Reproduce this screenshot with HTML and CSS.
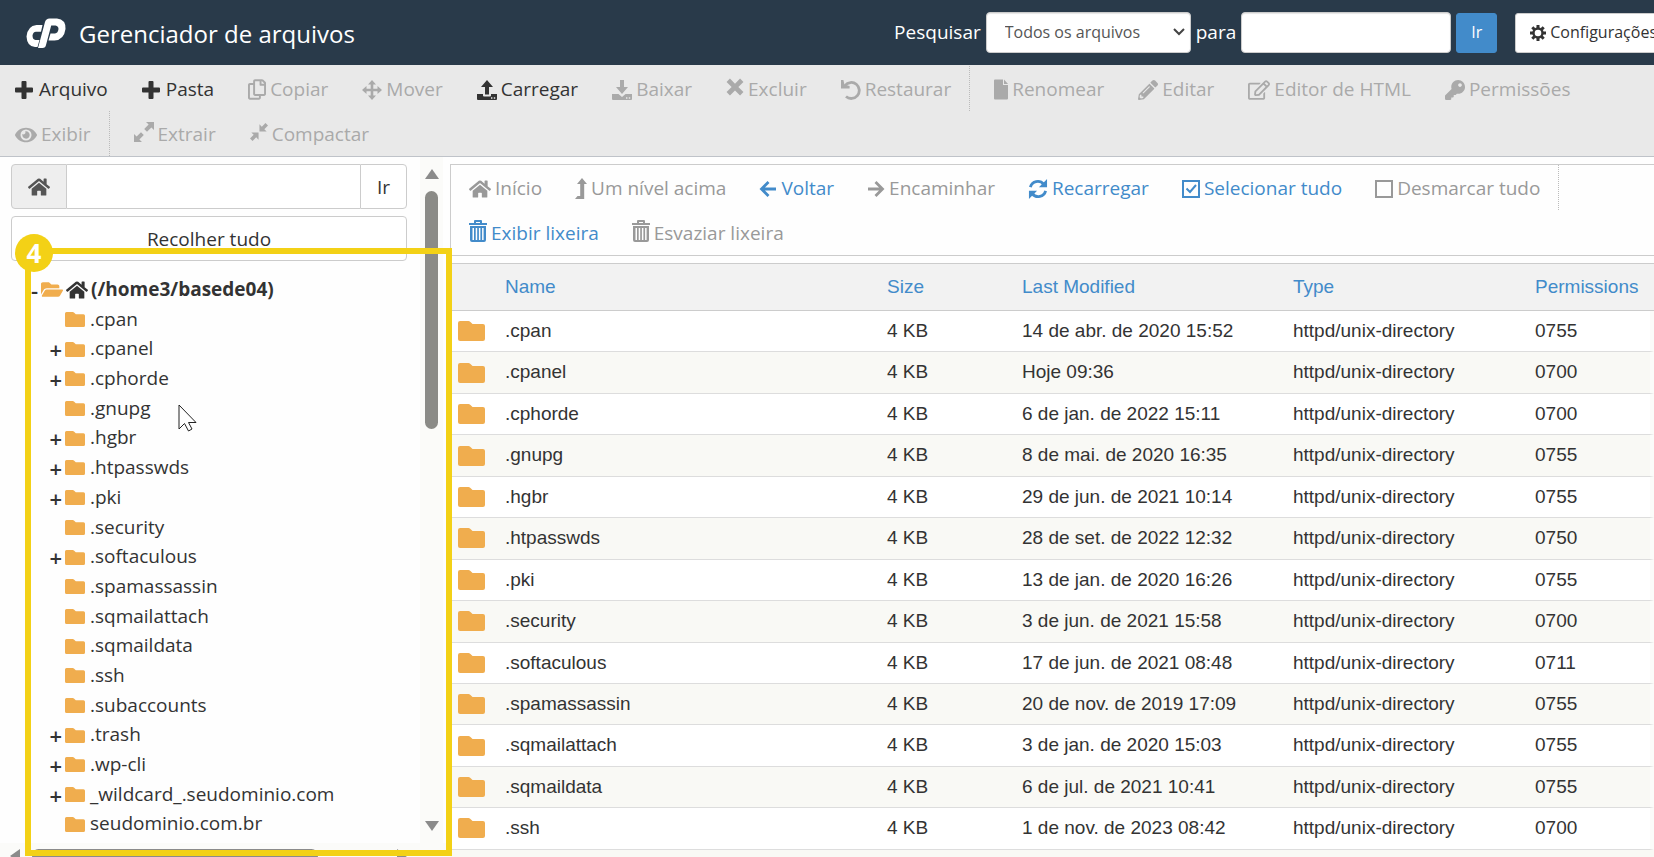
FILE: index.html
```html
<!DOCTYPE html>
<html lang="pt-BR">
<head>
<meta charset="utf-8">
<meta name="viewport" content="width=device-width, initial-scale=1">
<title>Gerenciador de arquivos</title>
<link rel="stylesheet" href="styles.css">
</head>
<body>
<svg class="sprite" aria-hidden="true">
  <symbol id="plus" viewBox="0 0 18 18"><path d="M6.500 1q0-1 1-1h3q1 0 1 1v5.500h5.500q1 0 1 1v3q0 1-1 1h-5.500v5.500q0 1-1 1h-3q-1 0-1-1v-5.500H1q-1 0-1-1v-3q0-1 1-1h5.500z"/></symbol>
  <symbol id="copy" viewBox="0 0 448 512"><path d="M433.941 65.941l-51.882-51.882A48 48 0 0 0 348.118 0H176c-26.510 0-48 21.490-48 48v48H48c-26.510 0-48 21.490-48 48v320c0 26.510 21.490 48 48 48h224c26.510 0 48-21.490 48-48v-48h80c26.510 0 48-21.490 48-48V99.882a48 48 0 0 0-14.059-33.941zM266 464H54a6 6 0 0 1-6-6V150a6 6 0 0 1 6-6h74v224c0 26.510 21.490 48 48 48h96v42a6 6 0 0 1-6 6zm128-96H182a6 6 0 0 1-6-6V54a6 6 0 0 1 6-6h106v88c0 13.255 10.745 24 24 24h88v202a6 6 0 0 1-6 6zm6-256h-64V48h9.632c1.591 0 3.117.632 4.243 1.757l48.368 48.368a6 6 0 0 1 1.757 4.243V112z"/></symbol>
  <symbol id="move" viewBox="0 0 20 20"><path d="M10 0l4 4.500h-2.700v4.200h4.200V6L20 10l-4.500 4v-2.700h-4.200v4.200H14L10 20l-4-4.500h2.700v-4.200H4.500V14L0 10l4.500-4v2.700h4.200V4.500H6z"/></symbol>
  <symbol id="upload" viewBox="0 0 20 20"><path d="M10 0l6 7h-4v7.500H8V7H4zM0 14h6v1.500q0 1 1 1h6q1 0 1-1V14h6v5q0 1-1 1H1q-1 0-1-1zM14 17.300v1.400h1.400v-1.400zM16.800 17.300v1.400h1.400v-1.400z" fill-rule="evenodd"/></symbol>
  <symbol id="download" viewBox="0 0 20 20"><path d="M8 0h4v7h4l-6 7-6-7h4zM0 14h6.500l3.500 3 3.500-3H20v5q0 1-1 1H1q-1 0-1-1zM14 17.300v1.400h1.400v-1.400zM16.800 17.300v1.400h1.400v-1.400z" fill-rule="evenodd"/></symbol>
  <symbol id="cross" viewBox="0 0 16 16"><path d="M3.500.500L8 5l4.500-4.500L15.500 3.500 11 8l4.500 4.500-3 3L8 11l-4.500 4.500-3-3L5 8 .500 3.500z"/></symbol>
  <symbol id="undo" viewBox="0 0 20 20"><path d="M4 5.500A8 8 0 1 1 5 16.500" fill="none" stroke="currentColor" stroke-width="2.800"/><path d="M0 0h2.400l1 4.600L8.600 6v2.600H0z"/></symbol>
  <symbol id="file" viewBox="0 0 14 20"><path d="M1 0h8v5.500h5V19q0 1-1 1H1q-1 0-1-1V1q0-1 1-1zM10 0l4 4.500h-4z"/></symbol>
  <symbol id="pencil" viewBox="0 0 512 512"><path d="M497.900 142.100l-46.100 46.100c-4.700 4.700-12.300 4.700-17 0l-111-111c-4.700-4.700-4.700-12.300 0-17l46.100-46.100c18.700-18.700 49.100-18.700 67.900 0l60.100 60.100c18.800 18.700 18.800 49.100 0 67.900zM284.200 99.800L21.600 362.400.400 483.900c-2.900 16.400 11.400 30.600 27.800 27.800l121.500-21.300 262.600-262.600c4.700-4.700 4.700-12.300 0-17l-111-111c-4.800-4.700-12.400-4.700-17.100 0zM124.100 339.900c-5.500-5.500-5.500-14.300 0-19.800l154-154c5.500-5.500 14.300-5.500 19.800 0s5.500 14.300 0 19.800l-154 154c-5.500 5.500-14.300 5.500-19.800 0zM88 424h48v36.300l-64.500 11.300-31.100-31.100L51.700 376H88v48z"/></symbol>
  <symbol id="edit" viewBox="0 0 576 512"><path d="M402.300 344.900l32-32c5-5 13.700-1.500 13.700 5.700V464c0 26.500-21.500 48-48 48H48c-26.500 0-48-21.500-48-48V112c0-26.500 21.500-48 48-48h273.500c7.100 0 10.700 8.600 5.700 13.700l-32 32c-1.500 1.500-3.500 2.300-5.700 2.300H48v352h352V350.500c0-2.100.800-4.100 2.300-5.600zm156.600-201.800L296.300 405.700l-90.400 10c-26.200 2.900-48.500-19.200-45.600-45.600l10-90.400L432.900 17.100c22.900-22.900 59.900-22.900 82.700 0l43.200 43.200c22.900 22.900 22.900 60 .100 82.800zM460.100 174L402 115.900 216.200 301.800l-7.300 65.300 65.300-7.300L460.100 174zm64.800-79.700l-43.200-43.200c-4.100-4.100-10.800-4.100-14.800 0L436 82l58.100 58.100 30.900-30.900c4-4.200 4-10.800-.100-14.900z"/></symbol>
  <symbol id="key" viewBox="0 0 512 512"><path d="M512 176C512 273.200 433.200 352 336 352c-11.200 0-22.200-1-32.800-3l-24 27A24 24 0 0 1 261.200 384H224v40c0 13.300-10.700 24-24 24h-40v40c0 13.300-10.700 24-24 24H24c-13.300 0-24-10.700-24-24v-78c0-6.400 2.500-12.500 7-17l161.800-161.800C163.100 213.800 160 195.300 160 176 160 78.800 238.800 0 336 0 433.500 0 512 78.500 512 176zM336 128c0 26.500 21.500 48 48 48s48-21.500 48-48-21.500-48-48-48-48 21.500-48 48z"/></symbol>
  <symbol id="eye" viewBox="0 0 576 512"><path d="M572.520 241.400C518.290 135.590 410.930 64 288 64S57.680 135.640 3.480 241.410a32.350 32.350 0 0 0 0 29.190C57.710 376.410 165.070 448 288 448s230.320-71.640 284.520-177.410a32.350 32.350 0 0 0 0-29.190zM288 400a144 144 0 1 1 144-144 143.930 143.930 0 0 1-144 144zm0-240a95.310 95.310 0 0 0-25.310 3.790 47.850 47.850 0 0 1-66.900 66.900A95.780 95.780 0 1 0 288 160z"/></symbol>
  <symbol id="expand" viewBox="0 0 20 20"><path d="M12 0h8v8l-2.600-2.600-4.400 4.400L10.200 7l4.400-4.400zM8 20H0v-8l2.600 2.600 4.400-4.400L9.800 13l-4.400 4.400z"/></symbol>
  <symbol id="compress" viewBox="0 0 20 20"><path d="M10.500 1.500l2.600 2.600L17.200 0 20 2.800l-4.100 4.100 2.600 2.600h-8zM9.500 18.500l-2.600-2.600L2.800 20 0 17.200l4.100-4.100-2.600-2.600h8z"/></symbol>
  <symbol id="home" viewBox="0 0 576 512"><path d="M280.370 148.260L96 300.110V464a16 16 0 0 0 16 16l112.060-.290a16 16 0 0 0 15.920-16V368a16 16 0 0 1 16-16h64a16 16 0 0 1 16 16v95.640a16 16 0 0 0 16 16.050L464 480a16 16 0 0 0 16-16V300L295.670 148.260a12.190 12.190 0 0 0-15.300 0zM571.600 251.470L488 182.560V44.050a12 12 0 0 0-12-12h-56a12 12 0 0 0-12 12v72.610L318.470 43a48 48 0 0 0-61 0L4.340 251.470a12 12 0 0 0-1.600 16.900l25.500 31A12 12 0 0 0 45.150 301l235.220-193.740a12.190 12.190 0 0 1 15.300 0L530.900 301a12 12 0 0 0 16.900-1.600l25.500-31a12 12 0 0 0-1.700-16.930z"/></symbol>
  <symbol id="level-up" viewBox="0 0 12 21"><path d="M7 0l5 6H9.200v15H0l2.500-3H5.200V6H2z"/></symbol>
  <symbol id="arrow-left" viewBox="0 0 18 18"><path d="M17 9H2.500M9.500 2l-7 7 7 7" fill="none" stroke="currentColor" stroke-width="2.800"/></symbol>
  <symbol id="arrow-right" viewBox="0 0 18 18"><path d="M1 9h14.500M8.500 2l7 7-7 7" fill="none" stroke="currentColor" stroke-width="2.800"/></symbol>
  <symbol id="sync" viewBox="0 0 20 21"><path d="M2 8.500A8 8 0 0 1 16 5.500M18 12.500A8 8 0 0 1 4 15.500" fill="none" stroke="currentColor" stroke-width="3"/><path d="M19.500 0v8.600H11l3-3 3-3zM.500 21v-8.600H9l-3 3-3 3z"/></symbol>
  <symbol id="checked" viewBox="0 0 18 18"><path d="M1 1h16v16H1zM4.500 8.500L8 12l6-7" fill="none" stroke="currentColor" stroke-width="2"/></symbol>
  <symbol id="unchecked" viewBox="0 0 18 18"><path d="M1 1h16v16H1z" fill="none" stroke="currentColor" stroke-width="2"/></symbol>
  <symbol id="trash" viewBox="0 0 18 22"><path d="M0 3h5V1q0-1 1-1h6q1 0 1 1v2h5v2H0zM7 2v1h4V2zM1 6h16v14q0 2-2 2H3q-2 0-2-2zM3.500 8v12H5V8zM6.700 8v12h1.500V8zM9.900 8v12h1.500V8zM13.100 8v12h1.500V8z" fill-rule="evenodd"/></symbol>
  <symbol id="gear" viewBox="0 0 16 16"><g stroke="currentColor" stroke-width="3"><path d="M8 0v3M8 13v3M0 8h3M13 8h3M2.300 2.300l2.200 2.200M11.500 11.500l2.200 2.200M13.700 2.300l-2.200 2.200M4.500 11.500l-2.200 2.200"/></g><circle cx="8" cy="8" r="4.500" fill="none" stroke="currentColor" stroke-width="2.400"/></symbol>
  <symbol id="folder" viewBox="0 0 26 20" preserveAspectRatio="none"><path d="M2 0h8q1 0 2 1l2 2h10q2 0 2 2v13q0 2-2 2H2q-2 0-2-2V2q0-2 2-2z"/></symbol>
  <symbol id="folder-open" viewBox="0 0 576 384"><path d="M572.700 228L500 352A64 64 0 0 1 445 384H45c-18.500 0-30-20-20.700-36L96.700 224A64 64 0 0 1 152 192h400c18.500 0 30 20 20.700 36zM152 160h328v-48c0-26.500-21.500-48-48-48H272L208 0H48C21.500 0 0 21.500 0 48v278L69 208C86 178 118 160 152 160z"/></symbol>
  <symbol id="logo" viewBox="0 0 40 30"><path d="M17 7h-6Q2 8 1 18.500 1.500 28.500 9.500 29H12l2-7H10q-3-.500-3-4.500 .500-3.500 3.500-3.800h5z"/><path d="M12.500 30L19.500 4Q20.500.500 24 .500h7.500Q40.500 1.500 40 11 38.500 22 29 22.500h-6l2-7h4.500q3-.500 3.500-4.500 0-3-3-3.500h-4.300L20.500 27q-.500 3-3.500 3z"/></symbol>
</svg>

<header class="header">
  <svg class="logo"><use href="#logo"/></svg>
  <h1 class="title">Gerenciador de arquivos</h1>
  <form class="search">
    <label for="scope">Pesquisar</label>
    <span class="select-box">
      <select id="scope" class="field select"><option>Todos os arquivos</option></select>
      <svg class="chevron" viewBox="0 0 12 8"><path d="M1 1l5 5 5-5" fill="none" stroke="currentColor" stroke-width="2"/></svg>
    </span>
    <label for="query">para</label>
    <input id="query" class="field query" type="text">
    <button class="go" type="button">Ir</button>
    <button class="settings" type="button"><svg class="gear"><use href="#gear"/></svg>Configurações</button>
  </form>
</header>

<nav class="toolbar actions">
  <button class="action on"><svg class="i18 wide"><use href="#plus"/></svg>Arquivo</button>
  <button class="action on"><svg class="i18 wide"><use href="#plus"/></svg>Pasta</button>
  <button class="action"><svg class="i18 tall"><use href="#copy"/></svg>Copiar</button>
  <button class="action"><svg class="i20"><use href="#move"/></svg>Mover</button>
  <button class="action on"><svg class="i20"><use href="#upload"/></svg>Carregar</button>
  <button class="action"><svg class="i20"><use href="#download"/></svg>Baixar</button>
  <button class="action"><svg class="i18 raised"><use href="#cross"/></svg>Excluir</button>
  <button class="action last"><svg class="i20"><use href="#undo"/></svg>Restaurar</button>
  <button class="action"><svg class="i14 tall"><use href="#file"/></svg>Renomear</button>
  <button class="action"><svg class="i20"><use href="#pencil"/></svg>Editar</button>
  <button class="action"><svg class="i22"><use href="#edit"/></svg>Editor de HTML</button>
  <button class="action"><svg class="i20"><use href="#key"/></svg>Permissões</button>
  <button class="action last"><svg class="i22"><use href="#eye"/></svg>Exibir</button>
  <button class="action"><svg class="i20 raised"><use href="#expand"/></svg>Extrair</button>
  <button class="action"><svg class="i18 raised"><use href="#compress"/></svg>Compactar</button>
</nav>

<main class="main">
  <aside class="sidebar">
    <div class="side-view">
      <div class="side-content">
        <form class="path">
          <button class="path-home" type="button" aria-label="Início"><svg class="i22"><use href="#home"/></svg></button>
          <input class="path-input" type="text" aria-label="Caminho">
          <button class="path-go" type="button">Ir</button>
        </form>
        <button class="collapse" type="button">Recolher tudo</button>
        <ul class="tree">
          <li class="root"><span class="sign">-</span><svg class="open"><use href="#folder-open"/></svg><svg class="i22"><use href="#home"/></svg><b>(/home3/basede04)</b></li>
          <li><span class="sign"></span><svg class="dir"><use href="#folder"/></svg>.cpan</li>
          <li><span class="sign">+</span><svg class="dir"><use href="#folder"/></svg>.cpanel</li>
          <li><span class="sign">+</span><svg class="dir"><use href="#folder"/></svg>.cphorde</li>
          <li><span class="sign"></span><svg class="dir"><use href="#folder"/></svg>.gnupg</li>
          <li><span class="sign">+</span><svg class="dir"><use href="#folder"/></svg>.hgbr</li>
          <li><span class="sign">+</span><svg class="dir"><use href="#folder"/></svg>.htpasswds</li>
          <li><span class="sign">+</span><svg class="dir"><use href="#folder"/></svg>.pki</li>
          <li><span class="sign"></span><svg class="dir"><use href="#folder"/></svg>.security</li>
          <li><span class="sign">+</span><svg class="dir"><use href="#folder"/></svg>.softaculous</li>
          <li><span class="sign"></span><svg class="dir"><use href="#folder"/></svg>.spamassassin</li>
          <li><span class="sign"></span><svg class="dir"><use href="#folder"/></svg>.sqmailattach</li>
          <li><span class="sign"></span><svg class="dir"><use href="#folder"/></svg>.sqmaildata</li>
          <li><span class="sign"></span><svg class="dir"><use href="#folder"/></svg>.ssh</li>
          <li><span class="sign"></span><svg class="dir"><use href="#folder"/></svg>.subaccounts</li>
          <li><span class="sign">+</span><svg class="dir"><use href="#folder"/></svg>.trash</li>
          <li><span class="sign">+</span><svg class="dir"><use href="#folder"/></svg>.wp-cli</li>
          <li><span class="sign">+</span><svg class="dir"><use href="#folder"/></svg>_wildcard_.seudominio.com</li>
          <li><span class="sign"></span><svg class="dir"><use href="#folder"/></svg>seudominio.com.br</li>
        </ul>
      </div>
      <div class="scroll-y"><i class="arrow up"></i><i class="thumb-y"></i><i class="arrow down"></i></div>
    </div>
    <div class="scroll-x"><i class="arrow left"></i><i class="thumb-x"></i><i class="arrow right"></i></div>
    <div class="highlight"><span class="badge">4</span></div>
    <svg class="cursor" viewBox="0 0 19 28"><path d="M1 1v24l5.500-5.500 4 7.500 3.500-2-3.500-6.500H18z" fill="#fff" stroke="#222"/></svg>
  </aside>

  <section class="files">
    <nav class="browse actions">
      <button class="action"><svg class="i22"><use href="#home"/></svg>Início</button>
      <button class="action"><svg class="i12 tall"><use href="#level-up"/></svg>Um nível acima</button>
      <button class="action on"><svg class="i18"><use href="#arrow-left"/></svg>Voltar</button>
      <button class="action"><svg class="i18"><use href="#arrow-right"/></svg>Encaminhar</button>
      <button class="action on"><svg class="i20"><use href="#sync"/></svg>Recarregar</button>
      <button class="action on"><svg class="i18"><use href="#checked"/></svg>Selecionar tudo</button>
      <button class="action last"><svg class="i18"><use href="#unchecked"/></svg>Desmarcar tudo</button>
      <button class="action on"><svg class="i18 bin"><use href="#trash"/></svg>Exibir lixeira</button>
      <button class="action"><svg class="i18 bin"><use href="#trash"/></svg>Esvaziar lixeira</button>
    </nav>
    <div class="listing">
      <table class="table">
        <colgroup><col class="c-icon"><col><col class="c-size"><col class="c-date"><col class="c-type"><col class="c-perm"></colgroup>
        <thead><tr><th></th><th><a href="#name">Name</a></th><th><a href="#size">Size</a></th><th><a href="#modified">Last Modified</a></th><th><a href="#type">Type</a></th><th><a href="#permissions">Permissions</a></th></tr></thead>
        <tbody>
          <tr><td><svg class="big"><use href="#folder"/></svg></td><td>.cpan</td><td>4 KB</td><td>14 de abr. de 2020 15:52</td><td>httpd/unix-directory</td><td>0755</td></tr>
          <tr><td><svg class="big"><use href="#folder"/></svg></td><td>.cpanel</td><td>4 KB</td><td>Hoje 09:36</td><td>httpd/unix-directory</td><td>0700</td></tr>
          <tr><td><svg class="big"><use href="#folder"/></svg></td><td>.cphorde</td><td>4 KB</td><td>6 de jan. de 2022 15:11</td><td>httpd/unix-directory</td><td>0700</td></tr>
          <tr><td><svg class="big"><use href="#folder"/></svg></td><td>.gnupg</td><td>4 KB</td><td>8 de mai. de 2020 16:35</td><td>httpd/unix-directory</td><td>0755</td></tr>
          <tr><td><svg class="big"><use href="#folder"/></svg></td><td>.hgbr</td><td>4 KB</td><td>29 de jun. de 2021 10:14</td><td>httpd/unix-directory</td><td>0755</td></tr>
          <tr><td><svg class="big"><use href="#folder"/></svg></td><td>.htpasswds</td><td>4 KB</td><td>28 de set. de 2022 12:32</td><td>httpd/unix-directory</td><td>0750</td></tr>
          <tr><td><svg class="big"><use href="#folder"/></svg></td><td>.pki</td><td>4 KB</td><td>13 de jan. de 2020 16:26</td><td>httpd/unix-directory</td><td>0755</td></tr>
          <tr><td><svg class="big"><use href="#folder"/></svg></td><td>.security</td><td>4 KB</td><td>3 de jun. de 2021 15:58</td><td>httpd/unix-directory</td><td>0700</td></tr>
          <tr><td><svg class="big"><use href="#folder"/></svg></td><td>.softaculous</td><td>4 KB</td><td>17 de jun. de 2021 08:48</td><td>httpd/unix-directory</td><td>0711</td></tr>
          <tr><td><svg class="big"><use href="#folder"/></svg></td><td>.spamassassin</td><td>4 KB</td><td>20 de nov. de 2019 17:09</td><td>httpd/unix-directory</td><td>0755</td></tr>
          <tr><td><svg class="big"><use href="#folder"/></svg></td><td>.sqmailattach</td><td>4 KB</td><td>3 de jan. de 2020 15:03</td><td>httpd/unix-directory</td><td>0755</td></tr>
          <tr><td><svg class="big"><use href="#folder"/></svg></td><td>.sqmaildata</td><td>4 KB</td><td>6 de jul. de 2021 10:41</td><td>httpd/unix-directory</td><td>0755</td></tr>
          <tr><td><svg class="big"><use href="#folder"/></svg></td><td>.ssh</td><td>4 KB</td><td>1 de nov. de 2023 08:42</td><td>httpd/unix-directory</td><td>0700</td></tr>
        </tbody>
      </table>
    </div>
  </section>
</main>
</body>
</html>
```

FILE: styles.css
```css
* { box-sizing: border-box; }

body {
  margin: 0;
  height: 100vh;
  display: flex;
  flex-direction: column;
  overflow: hidden;
  background: #fefefe;
  color: #333;
  font: 19px/27px "Open Sans", "Noto Sans", sans-serif;
}

button, input, select { font: inherit; color: inherit; margin: 0; }
button { cursor: pointer; }
svg { fill: currentColor; flex: none; overflow: visible; }
.sprite { position: absolute; width: 0; height: 0; }

/* Header */
.header {
  flex: none;
  display: flex;
  align-items: center;
  height: 65px;
  padding-left: 25px;
  background: #293a4a;
  color: #fff;
}
.logo { width: 41px; height: 30px; margin-right: 13px; }
.title { margin: 0; flex: 1; font-size: 24px; font-weight: 400; line-height: 32px; padding-top: 2px; white-space: nowrap; }
.search { flex: none; display: flex; align-items: center; gap: 5px; margin-right: -18px; }
.field { height: 41px; border: 1px solid #ccc; border-radius: 4px; background: #fff; color: #555; box-shadow: inset 0 1px 1px rgba(0, 0, 0, .1); }
.select-box { position: relative; display: flex; }
.select { width: 205px; padding: 0 18px; appearance: none; font-size: 16px; }
.chevron { position: absolute; right: 6px; top: 16px; width: 12px; height: 8px; color: #444; pointer-events: none; }
.query { width: 210px; }
.go { width: 41px; height: 40px; border: 1px solid #428bca; border-radius: 3px; background: #428bca; color: #fff; font-size: 16px; padding: 0; }
.settings { display: flex; align-items: center; gap: 4px; height: 40px; margin-left: 13px; padding: 0 14px; border: 1px solid #ccc; border-radius: 3px; background: #fff; color: #333; font-size: 16px; }
.gear { width: 16px; height: 16px; }

/* Action bars */
.actions { flex: none; display: flex; flex-wrap: wrap; }
.action {
  display: flex;
  align-items: center;
  gap: 4px;
  height: 45px;
  padding: 2px 18px 0 15px;
  border: 0;
  background: none;
  white-space: nowrap;
}
.action.last { border-right: 1px dotted #bbb; margin-right: 8px; }
.toolbar { column-gap: 1px; padding-top: 1px; background: #e9e9e9; border-bottom: 1px solid #bfc3c9; }
.toolbar .action { color: #aaa; }
.toolbar .on { color: #333; }
.browse { padding-left: 3px; border: 1px solid #ccc; border-right: 0; }
.browse .action { color: #999; }
.browse .on { color: #428bca; }

.i12 { width: 12px; height: 18px; }
.i14 { width: 14px; height: 18px; }
.i18 { width: 18px; height: 18px; }
.i20 { width: 20px; height: 20px; }
.i22 { width: 22px; height: 20px; }
.wide { margin-right: 2px; }
.tall { height: 21px; }
.bin { height: 22px; margin-bottom: 6px; }
.raised { margin-bottom: 5px; }

/* Sidebar */
.main { flex: 1; min-height: 0; display: flex; }
.sidebar { position: relative; flex: none; width: 450px; display: flex; flex-direction: column; }
.side-view { flex: 1; min-height: 0; display: flex; }
.side-content { flex: 1; min-width: 0; padding: 7px 13px 0 11px; overflow: hidden; }
.path { display: flex; height: 45px; margin-bottom: 7px; }
.path-home { display: grid; place-items: center; width: 56px; padding: 0; border: 1px solid #ccc; border-radius: 4px 0 0 4px; background: #eee; color: #555; }
.path-input { flex: 1; min-width: 0; border: 1px solid #ccc; border-width: 1px 0; }
.path-go { width: 47px; padding: 2px 0 0; border: 1px solid #ccc; border-radius: 0 4px 4px 0; background: #fff; }
.collapse { display: block; width: 100%; height: 45px; padding: 2px 0 0; border: 1px solid #ccc; border-radius: 4px; background: #fff; }
.tree { list-style: none; margin: 0; padding: 14px 0 0; line-height: 1.563; }
.tree li { display: flex; align-items: center; padding-left: 37px; white-space: nowrap; }
.tree .root { padding-left: 13px; }
.tree .root svg { margin-right: 3px; }
.root b { font-weight: 700; }
.sign { width: 17px; padding-right: 3px; text-align: right; font-size: 22px; font-weight: 600; line-height: 22px; }
.dir { width: 20px; height: 15px; margin-right: 5px; color: #f0ad4e; }
.open { width: 22px; height: 15px; color: #f0ad4e; }

.scroll-y { width: 23px; margin-right: 7px; display: flex; flex-direction: column; align-items: center; padding: 12px 0; background: #fbfbf9; }
.thumb-y { width: 13px; height: 238px; margin-top: 12px; border-radius: 7px; background: #8b8b87; }
.scroll-x { flex: none; height: 14px; display: flex; padding: 6px 43px 0 10px; background: #fbfbf9; }
.thumb-x { width: 286px; height: 13px; margin-left: 12px; border-radius: 7px; background: #8b8b8b; }
.arrow { width: 0; height: 0; border: 0 solid transparent; }
.up { border-width: 0 7px 10px; border-bottom-color: #8b8b8b; }
.down { margin-top: auto; border-width: 10px 7px 0; border-top-color: #8b8b8b; }
.left { border-width: 7px 10px 7px 0; border-right-color: #8b8b8b; }
.right { margin-left: auto; border-width: 7px 0 7px 10px; border-left-color: #8b8b8b; }

/* Step marker laid over the tree */
.highlight { position: absolute; z-index: 2; inset: 91px -2px 1px 25px; border: 6px solid #f3d116; pointer-events: none; }
.badge { position: absolute; left: -16px; top: -20px; display: grid; place-items: center; width: 38px; height: 38px; border-radius: 50%; background: #f3d116; color: #fff; font-size: 26px; font-weight: 700; }
.cursor { position: absolute; left: 178px; top: 247px; width: 19px; height: 28px; }

/* File list */
.files { flex: 1; min-width: 0; display: flex; flex-direction: column; padding-top: 7px; }
.listing { flex: 1; min-height: 0; margin-top: 7px; background: #f9f9f5; overflow: hidden; }
.table { width: 100%; table-layout: fixed; border-collapse: separate; border-spacing: 0; background: #fff; font-family: "Liberation Sans", Arial, sans-serif; line-height: 1.287; }
.c-icon { width: 47px; }
.c-size { width: 135px; }
.c-date { width: 271px; }
.c-type { width: 242px; }
.c-perm { width: 127px; }
.table th, .table td { padding: 8px; text-align: left; font-weight: 400; white-space: nowrap; }
.table th { height: 48px; background: #f2f2f2; border: solid #ccc; border-width: 1px 0; }
.table td { border-bottom: 1px solid #ddd; }
.table a { color: #428bca; text-decoration: none; }
.table tr:nth-child(even) td { background: #f9f9f5; }
.table tr td:last-child { border-right: 4px solid #fbfbf9; }
.big { display: block; width: 27px; height: 20px; color: #f0ad4e; }
```
